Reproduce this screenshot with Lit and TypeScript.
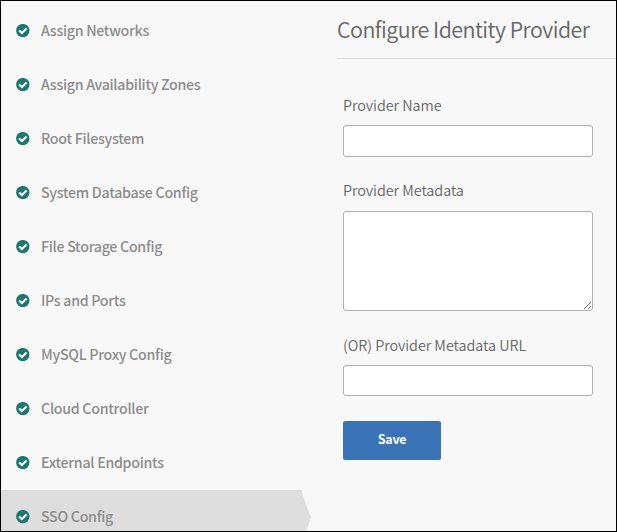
import { LitElement, html, css } from "lit";
import { customElement, property } from "lit/decorators.js";
import { classMap } from "lit/directives/class-map.js";

const STEPS = [
  "Assign Networks",
  "Assign Availability Zones",
  "Root Filesystem",
  "System Database Config",
  "File Storage Config",
  "IPs and Ports",
  "MySQL Proxy Config",
  "Cloud Controller",
  "External Endpoints",
  "SSO Config",
];

@customElement("step-list")
class StepList extends LitElement {
  @property() active = "";

  static styles = css`
    :host { display: block; }
    .step {
      display: flex;
      align-items: center;
      box-sizing: border-box;
      height: 54px;
      padding: 0 0 1px 15px;
      font-size: 14.2px;
      font-weight: 500;
      line-height: 20px;
      letter-spacing: -0.28px;
      color: #8c8c8c;
      white-space: nowrap;
    }
    .name { padding-bottom: 2px; }
    .active {
      background: #dedede;
      clip-path: polygon(0 0, 301px 0, 301px 3px, 310px 27.5px, 301px 52px, 301px 100%, 0 100%);
    }
    .icon { width: 14px; height: 14px; flex: none; margin-right: 11px; }
  `;

  render() {
    return html`${STEPS.map(
      (name) => html`<div class=${classMap({ step: true, active: name === this.active })}>
        <svg class="icon" viewBox="0 0 14 14">
          <circle cx="6.8" cy="6.6" r="6.7" fill="#1b786e" />
          <path d="M3.1 6.4 L5.9 9.1 L10.6 4.4" fill="none" stroke="#fff" stroke-width="2.1" />
        </svg>
        <span class="name">${name}</span>
      </div>`
    )}`;
  }
}

@customElement("provider-form")
class ProviderForm extends LitElement {
  static styles = css`
    :host { display: block; color: #666; }
    .title {
      box-sizing: border-box;
      height: 58px;
      margin: 0;
      padding-top: 12px;
      border-bottom: 1px solid #dfdfdf;
      font-size: 21.4px;
      line-height: 32px;
      font-weight: 350;
      letter-spacing: -0.51px;
      white-space: nowrap;
    }
    .form { display: flex; flex-direction: column; align-items: flex-start; padding: 36px 0 0 6px; }
    .label { font-size: 14.4px; line-height: 20px; font-weight: 350; letter-spacing: -0.04px; white-space: nowrap; margin-bottom: 10px; }
    .field {
      display: block;
      box-sizing: border-box;
      width: 250px;
      height: 32px;
      margin: 0 0 23px;
      padding: 4px 8px;
      border: 1px solid #b2b2b2;
      border-radius: 3px;
      background: #fff;
      font: inherit;
      outline: none;
    }
    .metadata { margin-bottom: 11px; }
    .area { height: 100px; margin-bottom: 24px; resize: both; }
    .url { height: 31px; margin-bottom: 25px; }
    .save {
      width: 98px;
      height: 39px;
      padding: 0 0 4px;
      border: 0;
      border-radius: 2px;
      background: #3b73b7;
      color: #fff;
      font-family: inherit;
      font-size: 12.6px;
      font-weight: 700;
      letter-spacing: -0.3px;
    }
  `;

  render() {
    return html`
      <h1 class="title">Configure Identity Provider</h1>
      <div class="form">
        <label class="label" for="name">Provider Name</label>
        <input class="field" id="name" />
        <label class="label metadata" for="metadata">Provider Metadata</label>
        <textarea class="field area" id="metadata"></textarea>
        <label class="label" for="url">(OR) Provider Metadata URL</label>
        <input class="field url" id="url" />
        <button class="save">Save</button>
      </div>
    `;
  }
}

@customElement("app-root")
class AppRoot extends LitElement {
  static styles = css`
    :host {
      display: grid;
      grid-template-columns: 336px 1fr;
      box-sizing: border-box;
      height: 532px;
      border: 1px solid #000;
      background: #f8f8f8;
      overflow: hidden;
      font-family: "Noto Sans CJK JP", "Noto Sans", sans-serif;
    }
    .steps { padding-top: 3px; }
  `;

  render() {
    return html`
      <step-list class="steps" active="SSO Config"></step-list>
      <provider-form></provider-form>
    `;
  }
}
